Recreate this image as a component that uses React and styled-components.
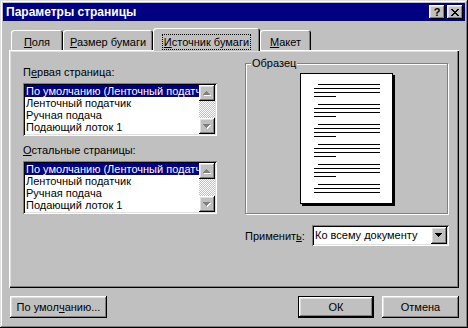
import React from "react";
import styled, {createGlobalStyle} from "styled-components";

const GlobalStyle = createGlobalStyle`
	html, body {
		margin: 0;
		padding: 0;
		background: #c0c0c0;
	}
	body {
		font-family: "Liberation Sans", Arial, sans-serif;
		font-size: 11px;
		color: #000;
	}
	u {
		text-underline-offset: 1px;
	}
`;

const raised = `
	box-shadow: inset -1px -1px #000, inset 1px 1px #fff, inset -2px -2px #808080, inset 2px 2px #dfdfdf;
`;

const sunken = `
	box-shadow: inset 1px 1px #808080, inset -1px -1px #fff, inset 2px 2px #000, inset -2px -2px #dfdfdf;
`;

const Window = styled.div`
	width: 468px;
	height: 328px;
	box-sizing: border-box;
	padding: 3px;
	background: #c0c0c0;
	box-shadow: inset -1px -1px #000, inset 1px 1px #dfdfdf, inset -2px -2px #808080, inset 2px 2px #fff;
	display: flex;
	flex-direction: column;
`;

const TitleBar = styled.div`
	height: 18px;
	flex: none;
	background: #000080;
	color: #fff;
	display: flex;
	align-items: center;
	padding: 0 2px 0 3px;
	font-weight: bold;
	font-size: 12px;
`;

const TitleText = styled.div`
	flex: 1;
	white-space: nowrap;
`;

const TitleButton = styled.div`
	width: 16px;
	height: 14px;
	box-sizing: border-box;
	background: #c0c0c0;
	${raised};
	display: flex;
	align-items: center;
	justify-content: center;
	color: #000;
	font-size: 11px;
	font-weight: bold;
	line-height: 14px;
	margin-left: ${(p) => (p.$gap ? 2 : 0)}px;
`;

const Body = styled.div`
	flex: 1;
	display: flex;
	flex-direction: column;
	padding: 7px 6px 0;
`;

const TabRow = styled.div`
	display: flex;
	align-items: flex-end;
	height: 22px;
	padding-left: 2px;
`;

const Tab = styled.div`
	box-sizing: border-box;
	width: ${(p) => p.$w}px;
	height: ${(p) => (p.$active ? 23 : 20)}px;
	margin-bottom: ${(p) => (p.$active ? -1 : 0)}px;
	padding-top: ${(p) => (p.$active ? 8 : 6)}px;
	text-align: center;
	line-height: 13px;
	white-space: nowrap;
	background: #c0c0c0;
	border-radius: 3px 3px 0 0;
	box-shadow: inset 1px 1px #fff, inset -1px 0 #000, inset -2px 0 #808080;
	position: relative;
	z-index: ${(p) => (p.$active ? 1 : 0)};
`;

const Focus = styled.span`
	outline: 1px dotted #000;
	outline-offset: 1px;
`;

const Panel = styled.div`
	height: 238px;
	flex: none;
	box-sizing: border-box;
	box-shadow: inset 1px 1px #fff, inset -1px -1px #000, inset -2px -2px #808080, inset 2px 2px #dfdfdf;
	display: flex;
	align-items: flex-start;
	gap: 28px;
	padding: 13px 10px 0 14px;
`;

const LeftCol = styled.div`
	width: 194px;
	margin-top: 3px;
	display: flex;
	flex-direction: column;
`;

const Label = styled.div`
	height: 13px;
	line-height: 13px;
	white-space: nowrap;
	margin-top: ${(p) => p.$top || 0}px;
	margin-bottom: 4px;
`;

const ListBox = styled.div`
	height: 53px;
	box-sizing: border-box;
	padding: 2px;
	background: #fff;
	${sunken};
	display: flex;
`;

const Items = styled.div`
	flex: 1;
	min-width: 0;
	overflow: hidden;
`;

const Item = styled.div`
	height: 12px;
	line-height: 12px;
	padding-left: 1px;
	white-space: nowrap;
	overflow: hidden;
	background: ${(p) => (p.$selected ? "#000080" : "transparent")};
	color: ${(p) => (p.$selected ? "#fff" : "#000")};
`;

const ScrollBar = styled.div`
	width: 16px;
	flex: none;
	display: flex;
	flex-direction: column;
`;

const ArrowButton = styled.div`
	width: 16px;
	height: 16px;
	box-sizing: border-box;
	background: #c0c0c0;
	${raised};
	display: flex;
	align-items: center;
	justify-content: center;
`;

const Track = styled.div`
	flex: 1;
	background-color: #fff;
	background-image: conic-gradient(#c0c0c0 25%, #fff 0 50%, #c0c0c0 0 75%, #fff 0);
	background-size: 2px 2px;
`;

const RightCol = styled.div`
	width: 204px;
	display: flex;
	flex-direction: column;
`;

const GroupBox = styled.div`
	position: relative;
	width: 203px;
	height: 151px;
	box-sizing: border-box;
	border: 1px solid #808080;
	box-shadow: inset 1px 1px #fff, 1px 1px #fff;
	display: flex;
	justify-content: center;
	padding-top: 9px;
`;

const Legend = styled.div`
	position: absolute;
	top: -7px;
	left: 5px;
	padding: 0 1px;
	line-height: 13px;
	background: #c0c0c0;
`;

const Page = styled.div`
	width: 93px;
	height: 131px;
	box-sizing: border-box;
	border: 1px solid #000;
	background: #fff;
	box-shadow: 2px 2px 0 #000;
`;

const ApplyRow = styled.div`
	margin-top: 11px;
	height: 21px;
	display: flex;
	align-items: center;
`;

const Combo = styled.div`
	margin-left: auto;
	width: 137px;
	height: 21px;
	box-sizing: border-box;
	padding: 2px;
	background: #fff;
	${sunken};
	display: flex;
`;

const ComboText = styled.div`
	flex: 1;
	padding-left: 1px;
	line-height: 17px;
	white-space: nowrap;
	overflow: hidden;
`;

const DropButton = styled(ArrowButton)`
	height: 17px;
`;

const Footer = styled.div`
	margin-top: 8px;
	display: flex;
	gap: 8px;
	padding-left: 1px;
`;

const Button = styled.div`
	width: ${(p) => p.$w}px;
	height: 22px;
	box-sizing: border-box;
	background: #c0c0c0;
	display: flex;
	align-items: center;
	justify-content: center;
	white-space: nowrap;
	margin-left: ${(p) => (p.$push ? "auto" : "0")};
	${(p) =>
		p.$default
			? "box-shadow: inset 0 0 0 1px #000, inset -2px -2px #000, inset 2px 2px #fff, inset -3px -3px #808080, inset 3px 3px #dfdfdf;"
			: raised}
`;

const pixels = (rows) =>
	rows
		.map(([y, x, w]) => `M${x} ${y}h${w}v1h-${w}z`)
		.join(" ");

const upRows = [
	[0, 3, 1],
	[1, 2, 3],
	[2, 1, 5],
	[3, 0, 7],
];
const downRows = [
	[0, 0, 7],
	[1, 1, 5],
	[2, 2, 3],
	[3, 3, 1],
];

function Arrow({rows, disabled}) {
	return (
		<svg width="8" height="5" viewBox="0 0 8 5" shapeRendering="crispEdges">
			{disabled ? (
				<path d={pixels(rows)} fill="#fff" transform="translate(1 1)" />
			) : null}
			<path d={pixels(rows)} fill={disabled ? "#808080" : "#000"} />
		</svg>
	);
}

function CloseGlyph() {
	const rows = [
		[0, 0, 2],
		[0, 6, 2],
		[1, 1, 2],
		[1, 5, 2],
		[2, 2, 4],
		[3, 3, 2],
		[4, 2, 4],
		[5, 1, 2],
		[5, 5, 2],
		[6, 0, 2],
		[6, 6, 2],
	];
	return (
		<svg width="8" height="7" viewBox="0 0 8 7" shapeRendering="crispEdges">
			<path d={pixels(rows)} fill="#000" />
		</svg>
	);
}

function PageLines() {
	const lines = [];
	for (let g = 0; g < 6; g++) {
		const y = 10 + g * 20;
		lines.push(<rect key={g + "a"} x="17" y={y} width="62" height="1" />);
		lines.push(<rect key={g + "b"} x="13" y={y + 4} width="66" height="1" />);
		lines.push(<rect key={g + "c"} x="13" y={y + 8} width="66" height="1" />);
		if (g < 5) {
			lines.push(<rect key={g + "d"} x="13" y={y + 12} width="22" height="1" />);
		}
	}
	return (
		<svg width="91" height="129" shapeRendering="crispEdges" fill="#000">
			{lines}
		</svg>
	);
}

const sources = [
	"По умолчанию (Ленточный податчик)",
	"Ленточный податчик",
	"Ручная подача",
	"Подающий лоток 1",
];

function SourceList() {
	return (
		<ListBox>
			<Items>
				{sources.map((s, i) => (
					<Item key={s} $selected={i === 0}>
						{s}
					</Item>
				))}
			</Items>
			<ScrollBar>
				<ArrowButton>
					<Arrow rows={upRows} disabled />
				</ArrowButton>
				<Track />
				<ArrowButton>
					<Arrow rows={downRows} disabled />
				</ArrowButton>
			</ScrollBar>
		</ListBox>
	);
}

export default function App() {
	return (
		<>
			<GlobalStyle />
			<Window>
				<TitleBar>
					<TitleText>Параметры страницы</TitleText>
					<TitleButton>?</TitleButton>
					<TitleButton $gap>
						<CloseGlyph />
					</TitleButton>
				</TitleBar>
				<Body>
					<TabRow>
						<Tab $w={52}>
							<u>П</u>оля
						</Tab>
						<Tab $w={90}>
							<u>Р</u>азмер бумаги
						</Tab>
						<Tab $w={107} $active>
							<Focus>
								<u>И</u>сточник бумаги
							</Focus>
						</Tab>
						<Tab $w={51}>
							<u>М</u>акет
						</Tab>
					</TabRow>
					<Panel>
						<LeftCol>
							<Label>
								П<u>е</u>рвая страница:
							</Label>
							<SourceList />
							<Label $top={8}>
								<u>О</u>стальные страницы:
							</Label>
							<SourceList />
						</LeftCol>
						<RightCol>
							<GroupBox>
								<Legend>Образец</Legend>
								<Page>
									<PageLines />
								</Page>
							</GroupBox>
							<ApplyRow>
								<span>
									Применит<u>ь</u>:
								</span>
								<Combo>
									<ComboText>Ко всему документу</ComboText>
									<DropButton>
										<Arrow rows={downRows} />
									</DropButton>
								</Combo>
							</ApplyRow>
						</RightCol>
					</Panel>
					<Footer>
						<Button $w={97}>
							По умол<u>ч</u>анию...
						</Button>
						<Button $w={76} $push $default>
							ОК
						</Button>
						<Button $w={77}>Отмена</Button>
					</Footer>
				</Body>
			</Window>
		</>
	);
}
